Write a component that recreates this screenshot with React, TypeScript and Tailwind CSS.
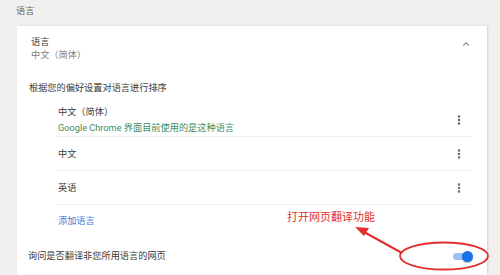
import { ChevronUp, EllipsisVertical } from "lucide-react"

const font = { fontFamily: 'Roboto, "Noto Sans CJK SC", sans-serif' }

function LangItem({ name }: { name: string }) {
  return (
    <div className="flex items-center justify-between border-b border-[#efefef] h-[34px] pl-[2px] pr-[7px]">
      <div className="text-[#3a3a3a]">{name}</div>
      <EllipsisVertical className="h-[12px] w-[12px] text-[#666]" strokeWidth={3} />
    </div>
  )
}

export default function App() {
  return (
    <div
      className="relative w-[500px] h-[275px] overflow-hidden bg-[#f1f0ef] text-[9.2px]"
      style={font}
    >
      <div className="h-[26px] pl-[16px] pt-[5px] leading-[12px] text-[#666]">语言</div>

      <div className="ml-[17px] mr-[13px] h-[249px] bg-white shadow-[1px_0_2px_rgba(0,0,0,0.12)]">
        {/* language summary */}
        <div className="flex items-start justify-between pl-[14px] pr-[16px] pt-[9px] leading-[13px]">
          <div>
            <div className="text-[#3a3a3a]">语言</div>
            <div className="text-[#808080]">中文（简体）</div>
          </div>
          <ChevronUp className="mt-[4px] h-[10px] w-[10px] text-[#666]" strokeWidth={2.5} />
        </div>

        <div className="pl-[12px] pt-[20px] leading-[13px] text-[#3a3a3a]">
          根据您的偏好设置对语言进行排序
        </div>

        <div className="ml-[39px] mr-[15px] mt-[10px]">
          <div className="flex items-center justify-between border-b border-[#efefef] h-[33px] pl-[2px] pr-[7px]">
            <div className="leading-[16px] -mt-[1px]">
              <div className="text-[#3a3a3a]">中文（简体）</div>
              <div className="text-[#3a8c63]">Google Chrome 界面目前使用的是这种语言</div>
            </div>
            <EllipsisVertical className="h-[12px] w-[12px] text-[#666]" strokeWidth={3} />
          </div>
          <LangItem name="中文" />
          <LangItem name="英语" />
          <div className="flex items-center h-[31px] pt-[1px] pl-[2px] text-[#4a7ad0]">添加语言</div>
        </div>

        <div className="flex items-center justify-between h-[40px] pl-[11px] pr-[14px] text-[#3a3a3a]">
          <span>询问是否翻译非您所用语言的网页</span>
          <div className="relative flex items-center w-[20px] h-[12px]">
            <div className="h-[7px] w-[18px] rounded-full bg-[#9dc1f5]" />
            <div className="absolute right-0 h-[11px] w-[11px] rounded-full bg-[#1a73e8] shadow-[0_1px_1px_rgba(0,0,0,0.3)]" />
          </div>
        </div>
      </div>

      {/* red annotation */}
      <div className="absolute left-[287px] top-[210px] text-[11px] leading-[16px] text-[#e0302e]">
        打开网页翻译功能
      </div>
      <svg className="absolute left-0 top-0" width="500" height="275" viewBox="0 0 500 275">
        <line x1="402" y1="253" x2="364" y2="232" stroke="#e0302e" strokeWidth="2" />
        <polygon points="355,227 369,228 364,236" fill="#e0302e" />
        <ellipse cx="444" cy="256" rx="44" ry="13.5" fill="none" stroke="#e0302e" strokeWidth="1.8" />
      </svg>
    </div>
  )
}
